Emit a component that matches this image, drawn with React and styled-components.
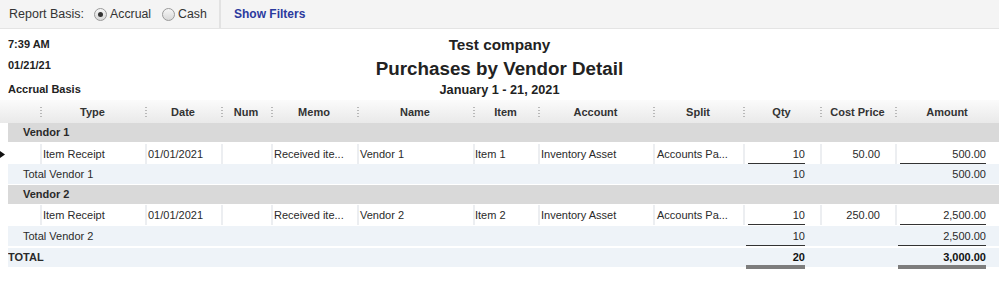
import { createGlobalStyle, styled, css } from "styled-components";

const GlobalStyle = createGlobalStyle`
  html, body {
    margin: 0;
    padding: 0;
    background: #ffffff;
  }
  body {
    font-family: "Liberation Sans", Arial, sans-serif;
    color: #333;
  }
`;

const COLS = "8px 32px 105px 76px 50px 86px 116px 65px 115px 90px 77px 75px 1fr";

const Toolbar = styled.div`
  height: 28px;
  display: flex;
  align-items: center;
  background: #f4f4f4;
  border-bottom: 1px solid #e4e4e4;
  font-size: 12.5px;
  color: #333;
  white-space: nowrap;
`;

const BasisGroup = styled.div`
  display: flex;
  align-items: center;
  flex-shrink: 0;
  box-sizing: border-box;
  height: 100%;
  width: 221px;
  padding-left: 9px;
  border-right: 2px solid #e2e2e2;
`;

const BasisLabel = styled.span`
  margin-right: 10px;
`;

const RadioLabel = styled.label`
  display: flex;
  align-items: center;
  gap: 3px;
  margin-right: 11px;
  font-size: 12.3px;
`;

const RadioCircle = styled.span`
  width: 11px;
  height: 11px;
  border-radius: 50%;
  border: 1px solid #9a9a9a;
  background: linear-gradient(#f6f6f6, #d8d8d8);
  display: flex;
  align-items: center;
  justify-content: center;
  ${(p) =>
    p.$checked &&
    css`
      &::after {
        content: "";
        width: 5px;
        height: 5px;
        border-radius: 50%;
        background: #333;
      }
    `}
`;

const FilterLink = styled.a`
  margin-left: 13px;
  font-size: 12px;
  font-weight: bold;
  color: #2b3a9e;
  text-decoration: none;
  cursor: pointer;
`;

const ReportHead = styled.div`
  display: grid;
  grid-template-columns: 1fr auto 1fr;
  height: 71px;
`;

const MetaCol = styled.div`
  display: flex;
  flex-direction: column;
  padding-left: 8px;
  padding-top: 9px;
  font-size: 11px;
  font-weight: bold;
  color: #222;
`;

const MetaLine = styled.div`
  line-height: 13px;
  margin-bottom: ${(p) => p.$gap || 0}px;
`;

const TitleCol = styled.div`
  display: flex;
  flex-direction: column;
  align-items: center;
  padding-top: 7px;
  color: #222;
  font-weight: bold;
`;

const Company = styled.div`
  font-size: 15.3px;
  line-height: 18px;
`;

const Title = styled.div`
  font-size: 18.8px;
  line-height: 22px;
  margin-top: 4px;
`;

const Period = styled.div`
  font-size: 12.7px;
  line-height: 15px;
  margin-top: 3px;
`;

const Grid = styled.div`
  display: grid;
  grid-template-columns: ${COLS};
`;

const HeaderRow = styled(Grid)`
  height: 23px;
  background: linear-gradient(#fbfbfb, #e9e9e9);
  font-size: 11px;
  font-weight: bold;
  color: #333;
`;

const HeadCell = styled.div`
  position: relative;
  display: flex;
  align-items: center;
  justify-content: center;
  grid-column: ${(p) => p.$span || "auto"};
  ${(p) =>
    p.$sep &&
    css`
      &::before {
        content: "";
        position: absolute;
        left: 0;
        top: 7px;
        width: 2px;
        height: 10px;
        background-image: linear-gradient(#b8b8b8 50%, transparent 50%);
        background-size: 2px 3px;
      }
    `}
`;

const rowTones = {
  group: "#d9d9d9",
  item: "#ffffff",
  total: "#eef3f8",
};

const Row = styled(Grid)`
  height: ${(p) => p.$h || 20}px;
  margin-top: ${(p) => p.$mt || 0}px;
  font-size: 11px;
  color: #2a2a2a;
  line-height: ${(p) => p.$h || 20}px;
`;

const Marker = styled.div`
  display: flex;
  align-items: center;
  background: #fff;
`;

const Cell = styled.div`
  grid-column: ${(p) => p.$span || "auto"};
  background: ${(p) => rowTones[p.$tone]};
  padding-left: ${(p) => (p.$pl !== undefined ? p.$pl : 1)}px;
  white-space: nowrap;
  overflow: hidden;
  font-weight: ${(p) => (p.$bold ? "bold" : "normal")};
  ${(p) =>
    p.$tone === "item" &&
    p.$sep &&
    css`
      border-left: 2px solid #eceef1;
    `}
`;

const Num = styled.div`
  text-align: right;
  margin-left: 3px;
  margin-right: ${(p) => p.$mr || 15}px;
  height: 100%;
  box-sizing: border-box;
  font-weight: ${(p) => (p.$bold ? "bold" : "normal")};
  color: ${(p) => (p.$bold ? "#111" : "#2a2a2a")};
  ${(p) =>
    p.$under &&
    css`
      border-bottom: 1px solid #333;
    `}
`;

const RuleRow = styled(Grid)`
  height: 4px;
  margin-top: -2px;
`;

const Rule = styled.div`
  grid-column: ${(p) => p.$col};
  margin-left: 3px;
  margin-right: ${(p) => p.$mr}px;
  background: #7d7d7d;
`;

const vendors = [
  {
    name: "Vendor 1",
    item: "Item 1",
    qty: "10",
    cost: "50.00",
    amount: "500.00",
    selected: true,
  },
  {
    name: "Vendor 2",
    item: "Item 2",
    qty: "10",
    cost: "250.00",
    amount: "2,500.00",
  },
];

const headers = [
  "Type",
  "Date",
  "Num",
  "Memo",
  "Name",
  "Item",
  "Account",
  "Split",
  "Qty",
  "Cost Price",
  "Amount",
];

function Arrow() {
  return (
    <svg width="5" height="7" viewBox="0 0 5 7">
      <polygon points="0,0 5,3.5 0,7" fill="#111" />
    </svg>
  );
}

function VendorBlock({ v, index, last }) {
  return (
    <>
      <Row $h={19} $mt={index === 0 ? 0 : 1}>
        <Marker />
        <Cell $tone="group" $span="2 / -1" $pl={15} $bold>
          {v.name}
        </Cell>
      </Row>
      <Row $mt={index === 0 ? 2 : 1}>
        <Marker>{v.selected && <Arrow />}</Marker>
        <Cell $tone="item" />
        <Cell $tone="item" $sep>Item Receipt</Cell>
        <Cell $tone="item" $sep>01/01/2021</Cell>
        <Cell $tone="item" $sep></Cell>
        <Cell $tone="item" $sep>Received ite...</Cell>
        <Cell $tone="item" $sep>{v.name}</Cell>
        <Cell $tone="item" $sep $pl={0}>{v.item}</Cell>
        <Cell $tone="item" $sep>Inventory Asset</Cell>
        <Cell $tone="item" $sep $pl={2}>Accounts Pa...</Cell>
        <Cell $tone="item" $sep $pl={0}>
          <Num $under>{v.qty}</Num>
        </Cell>
        <Cell $tone="item" $sep $pl={0}>
          <Num>{v.cost}</Num>
        </Cell>
        <Cell $tone="item" $sep $pl={0}>
          <Num $mr={13} $under>{v.amount}</Num>
        </Cell>
      </Row>
      <Row $h={20} $mt={index === 0 ? 0 : 1}>
        <Marker />
        <Cell $tone="total" $span="2 / 11" $pl={15}>
          Total {v.name}
        </Cell>
        <Cell $tone="total" $pl={0}>
          <Num $under={last}>{v.qty}</Num>
        </Cell>
        <Cell $tone="total" />
        <Cell $tone="total" $pl={0}>
          <Num $mr={13} $under={last}>{v.amount}</Num>
        </Cell>
      </Row>
    </>
  );
}

export default function App() {
  return (
    <>
      <GlobalStyle />
      <Toolbar>
        <BasisGroup>
          <BasisLabel>Report Basis:</BasisLabel>
          <RadioLabel>
            <RadioCircle $checked />
            Accrual
          </RadioLabel>
          <RadioLabel>
            <RadioCircle />
            Cash
          </RadioLabel>
        </BasisGroup>
        <FilterLink>Show Filters</FilterLink>
      </Toolbar>

      <ReportHead>
        <MetaCol>
          <MetaLine $gap={8}>7:39 AM</MetaLine>
          <MetaLine $gap={11}>01/21/21</MetaLine>
          <MetaLine>Accrual Basis</MetaLine>
        </MetaCol>
        <TitleCol>
          <Company>Test company</Company>
          <Title>Purchases by Vendor Detail</Title>
          <Period>January 1 - 21, 2021</Period>
        </TitleCol>
        <div />
      </ReportHead>

      <HeaderRow>
        <HeadCell $span="1 / 3" />
        {headers.map((h) => (
          <HeadCell key={h} $sep>
            {h}
          </HeadCell>
        ))}
      </HeaderRow>

      {vendors.map((v, i) => (
        <VendorBlock key={v.name} v={v} index={i} last={i === vendors.length - 1} />
      ))}

      <Row $h={19} $mt={2}>
        <Marker />
        <Cell $tone="total" $span="2 / 11" $pl={0} $bold>
          TOTAL
        </Cell>
        <Cell $tone="total" $pl={0}>
          <Num $bold>20</Num>
        </Cell>
        <Cell $tone="total" />
        <Cell $tone="total" $pl={0}>
          <Num $bold $mr={13}>3,000.00</Num>
        </Cell>
      </Row>
      <RuleRow>
        <Rule $col="11" $mr={15} />
        <Rule $col="13" $mr={13} />
      </RuleRow>
    </>
  );
}
